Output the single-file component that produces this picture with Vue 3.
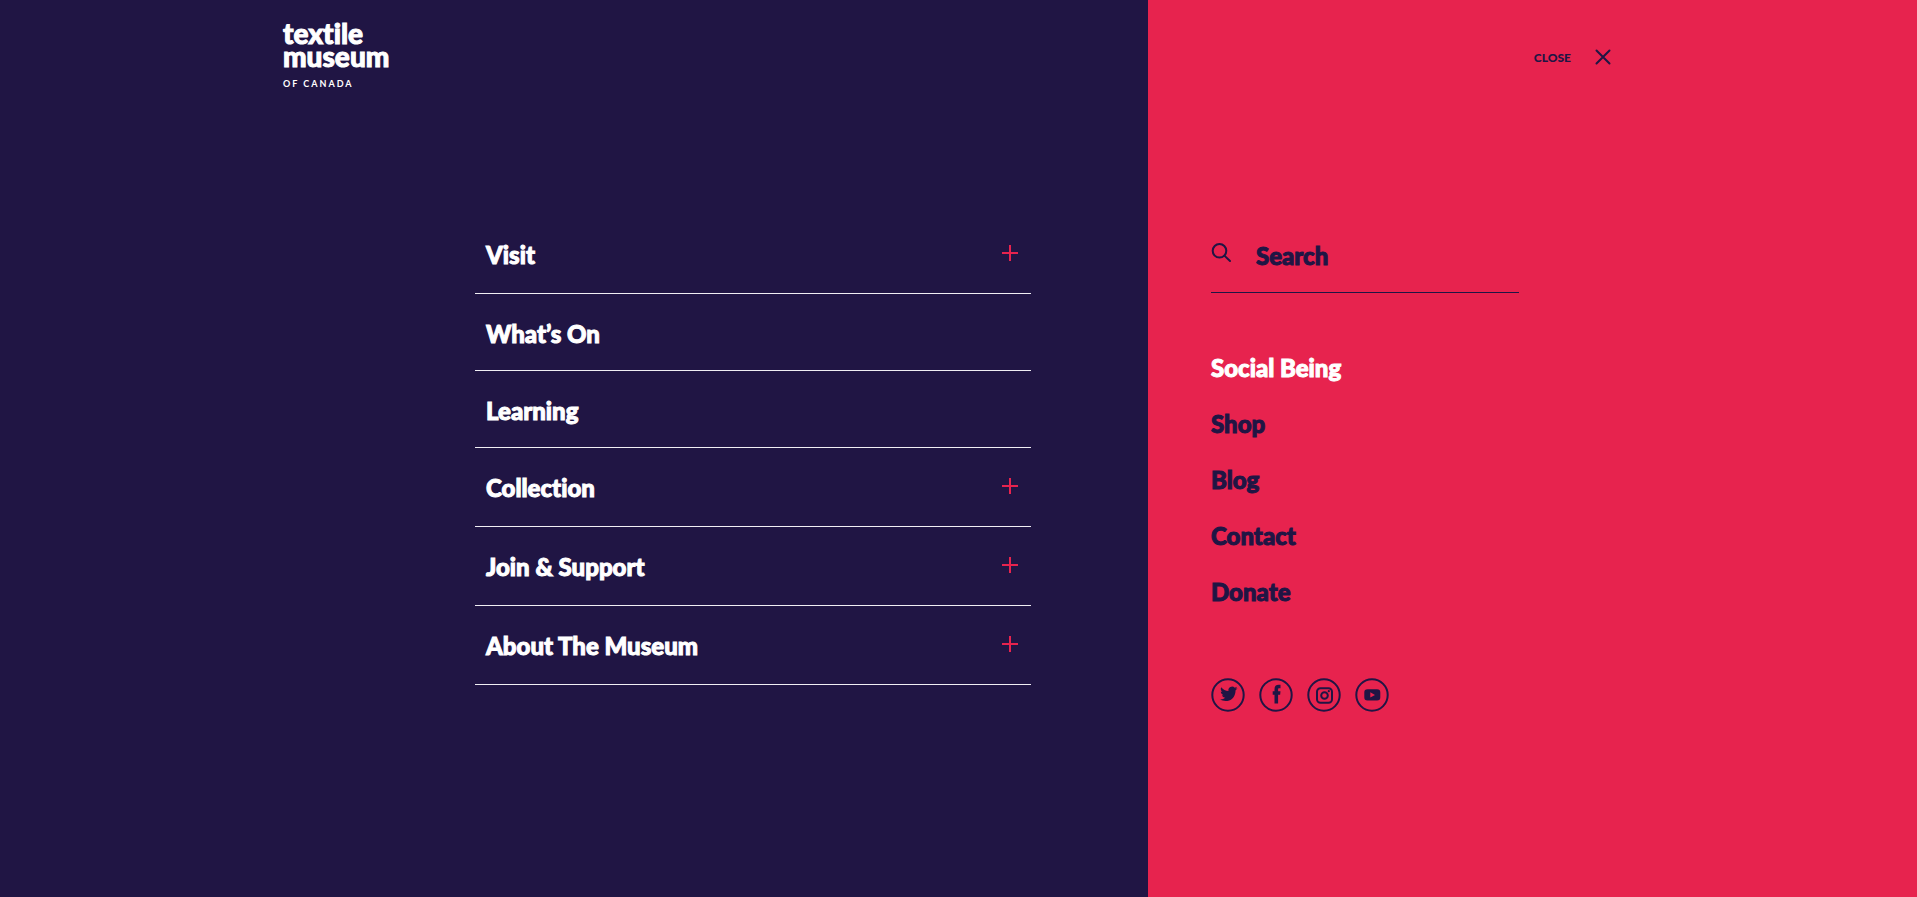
<script setup>
import { ref } from 'vue'

const query = ref('')

const menu = [
  { label: 'Visit', expandable: true },
  { label: 'What’s On', expandable: false },
  { label: 'Learning', expandable: false },
  { label: 'Collection', expandable: true },
  { label: 'Join & Support', expandable: true },
  { label: 'About The Museum', expandable: true },
]

const links = [
  { label: 'Social Being', current: true },
  { label: 'Shop' },
  { label: 'Blog' },
  { label: 'Contact' },
  { label: 'Donate' },
]
</script>

<template>
  <div class="overlay">
    <section class="panel primary">
      <header class="brand-bar">
        <a class="brand" href="#" aria-label="Textile Museum of Canada">
          <span class="brand-name">textile<br />museum</span>
          <span class="brand-place">OF CANADA</span>
        </a>
      </header>
      <nav class="menu" aria-label="Main">
        <ul>
          <li v-for="item in menu" :key="item.label">
            <button v-if="item.expandable" type="button" class="row expandable" aria-expanded="false">
              <span>{{ item.label }}</span>
              <svg class="plus" viewBox="0 0 16 16" aria-hidden="true">
                <path d="M8 0v16M0 8h16" />
              </svg>
            </button>
            <a v-else class="row" href="#">{{ item.label }}</a>
          </li>
        </ul>
      </nav>
    </section>

    <section class="panel secondary">
      <header class="close-bar">
        <button type="button" class="close">
          <span>CLOSE</span>
          <svg viewBox="0 0 16 16" aria-hidden="true">
            <path d="M1.5 1.5l13 13M14.5 1.5l-13 13" />
          </svg>
        </button>
      </header>
      <div class="side">
        <form class="search" role="search" @submit.prevent>
          <label for="site-search" aria-label="Search">
            <svg viewBox="0 0 20 20" aria-hidden="true">
              <circle cx="8.500" cy="7.800" r="6.800" />
              <path d="M13.400 12.600l5.600 5.400" />
            </svg>
          </label>
          <input id="site-search" v-model="query" type="text" placeholder="Search" />
        </form>
        <ul class="links">
          <li v-for="link in links" :key="link.label">
            <a href="#" :class="{ current: link.current }">{{ link.label }}</a>
          </li>
        </ul>
        <ul class="social">
          <li>
            <a href="#" aria-label="Twitter">
              <svg viewBox="0 0 34 34">
                <circle class="ring" cx="17" cy="17" r="15.700" />
                <path d="M26.500 10.200c-.6.3-1.300.5-2 .55.700-.4 1.200-1.100 1.500-1.900-.7.4-1.400.7-2.200.85a3.700 3.700 0 0 0-6.300 3.400c-3-.15-5.500-1.600-7.300-3.900-.9 1.700-.4 3.700 1.200 4.800-.6 0-1.100-.2-1.600-.45 0 1.700 1.200 3.200 2.800 3.600-.5.15-1 .15-1.600.05.4 1.500 1.800 2.500 3.300 2.550a7.500 7.500 0 0 1-5.500 1.600c6 3.900 15.600 1.300 15.800-9.200.8-.5 1.400-1.200 1.900-1.950z" />
              </svg>
            </a>
          </li>
          <li>
            <a href="#" aria-label="Facebook">
              <svg viewBox="0 0 34 34">
                <circle class="ring" cx="17" cy="17" r="15.700" />
                <path d="M15.500 25.500v-8.700h-1.800v-3.500h1.800v-2c0-3.200 1.400-4.600 4.300-4.600h1.700v3.500h-1.200c-.9 0-1.200.35-1.200 1.100v2h2.400l-.35 3.500h-2.050v8.700z" />
              </svg>
            </a>
          </li>
          <li>
            <a href="#" aria-label="Instagram">
              <svg viewBox="0 0 34 34">
                <circle class="ring" cx="17" cy="17" r="15.700" />
                <rect class="ring" x="10" y="10.200" width="15" height="14.600" rx="3.500" />
                <circle class="lens" cx="17.500" cy="17.500" r="3.300" />
                <circle cx="21.800" cy="13.200" r="1.100" />
              </svg>
            </a>
          </li>
          <li>
            <a href="#" aria-label="YouTube">
              <svg viewBox="0 0 34 34">
                <circle class="ring" cx="17" cy="17" r="15.700" />
                <path fill-rule="evenodd" d="M12.600 11.200h9.400c2.400 0 3.300 1 3.300 3.300v4.800c0 2.300-.9 3.300-3.300 3.300h-9.400c-2.400 0-3.300-1-3.300-3.300v-4.800c0-2.300.9-3.300 3.300-3.300zM15.300 14.300v5.200l4.700-2.600z" />
              </svg>
            </a>
          </li>
        </ul>
      </div>
    </section>
  </div>
</template>

<style>
body {
  background: #201544;
}
</style>

<style scoped>
.overlay {
  --navy: #201544;
  --red: #e7234e;
  display: grid;
  grid-template-columns: 1148fr 769fr;
  min-height: 100vh;
  font-family: Lato, "Liberation Sans", sans-serif;
  font-size: 24px;
  font-weight: 900;
  font-variant-ligatures: none;
  line-height: 32px;
}

.panel {
  display: grid;
  grid-template-rows: 215px auto;
  align-content: start;
}

.primary {
  grid-template-columns: 283fr 192fr 556fr 117fr;
  background: var(--navy);
  color: #fff;
}

.secondary {
  grid-template-columns: 63fr minmax(0, 308fr) 92fr 306fr;
  background: var(--red);
  color: var(--navy);
}

ul {
  margin: 0;
  padding: 0;
  list-style: none;
}

a {
  color: inherit;
  text-decoration: none;
}

button {
  border: 0;
  background: none;
  color: inherit;
  font: inherit;
  font-variant-ligatures: none;
  text-align: left;
  cursor: pointer;
}

.brand-name,
.row,
.search input,
.links {
  -webkit-text-stroke: 1px currentColor;
}

.brand-bar {
  grid-column: 2 / 4;
  padding-top: 19px;
}

.brand {
  display: inline-flex;
  flex-direction: column;
}

.brand-name {
  font-size: 28px;
  line-height: 23px;
}

.brand-place {
  margin-top: 10px;
  font-size: 9px;
  font-weight: 700;
  line-height: 12px;
  letter-spacing: 2px;
}

.menu {
  grid-column: 3;
}

.menu li {
  border-bottom: 1px solid #f0eef4;
}

.row {
  display: flex;
  align-items: flex-start;
  justify-content: space-between;
  box-sizing: border-box;
  width: 100%;
  padding: 24px 13px 20px 11px;
}

.expandable {
  padding-bottom: 22px;
}

.plus {
  width: 16px;
  height: 16px;
  margin-top: 6px;
  fill: none;
  stroke: var(--red);
  stroke-width: 2;
}

.close-bar {
  grid-column: 2 / 4;
  display: flex;
  align-items: flex-start;
  justify-content: flex-end;
  padding-top: 49px;
}

.close {
  display: flex;
  align-items: flex-start;
  gap: 24px;
  padding: 0;
  font-size: 12px;
  line-height: 18px;
}

.close svg {
  width: 16px;
  height: 16px;
  fill: none;
  stroke: currentColor;
  stroke-width: 2;
  stroke-linecap: round;
}

.side {
  grid-column: 2;
}

.search {
  display: flex;
  align-items: flex-start;
  gap: 25px;
  padding: 25px 0 20px;
  border-bottom: 1px solid var(--navy);
}

.search label {
  display: flex;
  padding-top: 3px;
}

.search svg {
  width: 20px;
  height: 20px;
  fill: none;
  stroke: currentColor;
  stroke-width: 2;
  stroke-linecap: round;
}

.search input {
  flex: 1;
  min-width: 0;
  height: 32px;
  padding: 0;
  border: 0;
  outline: 0;
  background: none;
  color: inherit;
  font: inherit;
}

.search input::placeholder {
  color: inherit;
  opacity: 1;
}

.links {
  display: grid;
  gap: 24px;
  padding-top: 59px;
}

.links .current {
  color: #fff;
}

.social {
  display: flex;
  gap: 14px;
  padding-top: 70px;
}

.social a {
  display: block;
}

.social svg {
  display: block;
  width: 34px;
  height: 34px;
  fill: currentColor;
}

.social .ring,
.social .lens {
  fill: none;
  stroke: currentColor;
  stroke-width: 2;
}
</style>
